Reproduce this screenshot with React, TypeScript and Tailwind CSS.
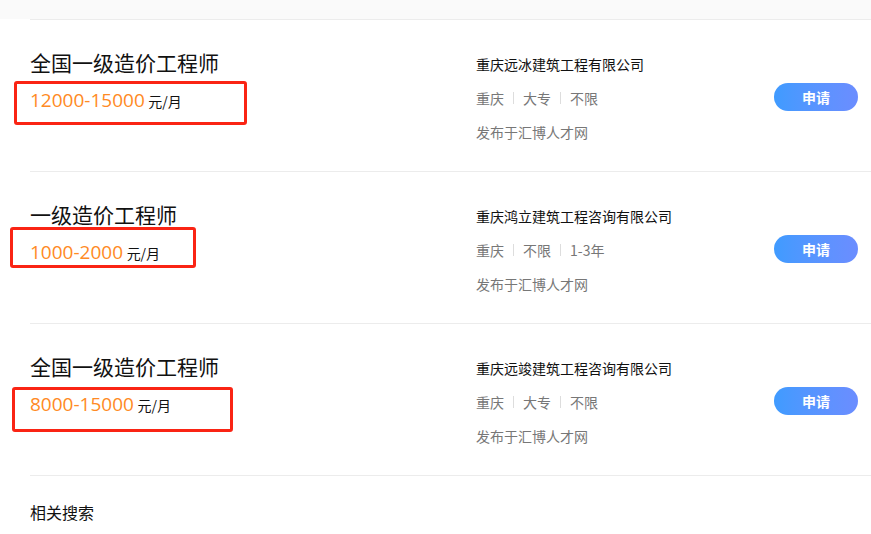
const jobs = [
  {
    title: "全国一级造价工程师",
    salary: "12000-15000",
    company: "重庆远冰建筑工程有限公司",
    tags: ["重庆", "大专", "不限"],
    box: "left-[-16px] top-[61px] w-[233px] h-[44px]",
  },
  {
    title: "一级造价工程师",
    salary: "1000-2000",
    company: "重庆鸿立建筑工程咨询有限公司",
    tags: ["重庆", "不限", "1-3年"],
    box: "left-[-20px] top-[55px] w-[186px] h-[41px]",
  },
  {
    title: "全国一级造价工程师",
    salary: "8000-15000",
    company: "重庆远竣建筑工程咨询有限公司",
    tags: ["重庆", "大专", "不限"],
    box: "left-[-18px] top-[63px] w-[221px] h-[45px]",
  },
];

const App = () => (
  <div
    className="w-[871px] h-[534px] bg-white overflow-hidden text-[#222]"
    style={{ fontFamily: '"Microsoft YaHei", "Noto Sans CJK SC", sans-serif' }}
  >
    <div className="h-[19px] bg-[#fafafa]" />
    <div className="pl-[30px]">
      {jobs.map((job, i) => (
        <div key={i} className="relative flex h-[152px] border-t border-[#ececec]">
          <div className="relative w-[446px] pt-[30px]">
            <div className="text-[21px] leading-[24px] text-[#111]">{job.title}</div>
            <div className="mt-[14px] leading-[24px]">
              <span
                className="text-[19px] text-[#ff8a24]"
                style={{ fontFamily: '"Open Sans", "Noto Sans CJK SC", sans-serif' }}
              >
                {job.salary}
              </span>{" "}
              <span className="text-[14px] text-[#111]">元/月</span>
            </div>
            <div className={`absolute border-[3px] border-[#fa2414] rounded-[3px] ${job.box}`} />
          </div>
          <div className="flex flex-col gap-[14px] pt-[34px] text-[14px] leading-[20px]">
            <div className="text-[#111]">{job.company}</div>
            <div className="flex items-center text-[#777]">
              {job.tags.map((t, k) => (
                <span key={k} className="flex items-center">
                  {k > 0 && <span className="mx-[9px] h-[12px] w-px bg-[#ddd]" />}
                  {t}
                </span>
              ))}
            </div>
            <div className="text-[#777]">发布于汇博人才网</div>
          </div>
          <div className="ml-auto mr-[13px] pt-[63px]">
            <div className="flex h-[28px] w-[84px] items-center justify-center rounded-full bg-gradient-to-r from-[#3f9bff] to-[#6b8dff] text-[14px] font-bold text-white">
              申请
            </div>
          </div>
        </div>
      ))}
      <div className="border-t border-[#ececec] pt-[25px] text-[16px] leading-[22px] text-[#111]">
        相关搜索
      </div>
    </div>
  </div>
);

export default App;
